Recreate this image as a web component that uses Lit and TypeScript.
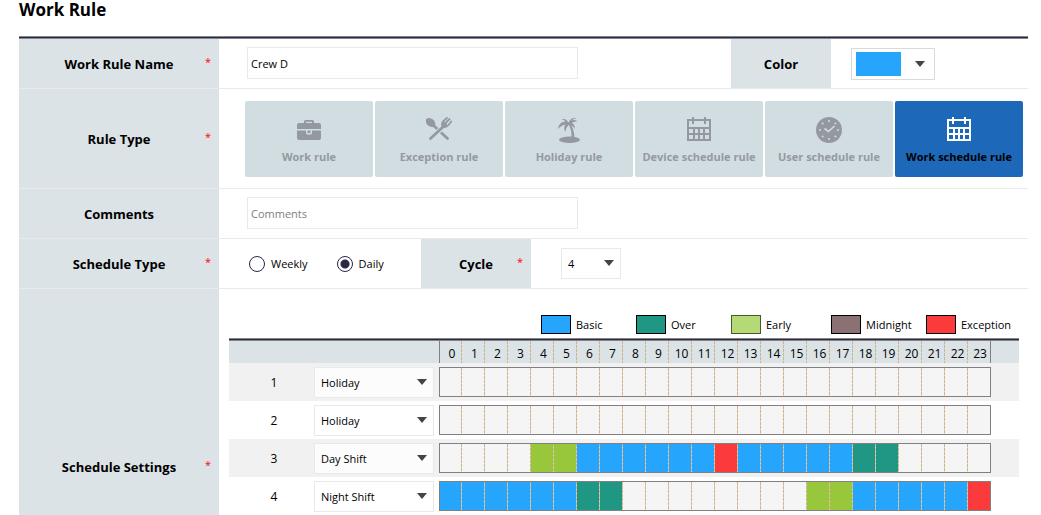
import { LitElement, html, css, svg } from "lit";
import { customElement, property, state } from "lit/decorators.js";
import { classMap } from "lit/directives/class-map.js";

type Kind = "none" | "basic" | "over" | "early" | "exception";
type Span = [number, number, Kind];

interface DayPlan {
  day: number;
  shift: string;
  spans: Span[];
}

const HOURS = Array.from({ length: 24 }, (_, h) => h);

const SHIFTS = ["Holiday", "Day Shift", "Night Shift"];

const PLANS: DayPlan[] = [
  { day: 1, shift: "Holiday", spans: [] },
  { day: 2, shift: "Holiday", spans: [] },
  {
    day: 3,
    shift: "Day Shift",
    spans: [[4, 6, "early"], [6, 12, "basic"], [12, 13, "exception"], [13, 18, "basic"], [18, 20, "over"]],
  },
  {
    day: 4,
    shift: "Night Shift",
    spans: [[0, 6, "basic"], [6, 8, "over"], [16, 18, "early"], [18, 23, "basic"], [23, 24, "exception"]],
  },
];

const LEGEND = [
  { kind: "basic", text: "Basic" },
  { kind: "over", text: "Over" },
  { kind: "early", text: "Early" },
  { kind: "midnight", text: "Midnight" },
  { kind: "exception", text: "Exception" },
];

const calendar = svg`
  <path fill-rule="evenodd" d="M1 2H6V0H8V2H18V0H20V2H25V24H1ZM3 4V10H23V4H20V7H18V4H8V7H6V4ZM3 12V16H7V12ZM9 12V16H12V12ZM14 12V16H17V12ZM19 12V16H23V12ZM3 18V22H7V18ZM9 18V22H12V18ZM14 18V22H17V18ZM19 18V22H23V18Z"/>`;

const ICONS: Record<string, unknown> = {
  briefcase: svg`
    <path fill-rule="evenodd" d="M8 6V4.500Q8 3 9.500 3H16.500Q18 3 18 4.500V6H23Q25 6 25 8V12H1V8Q1 6 3 6ZM10 6H16V4.800H10Z"/>
    <path fill-rule="evenodd" d="M1 13.500H10V16Q10 17.500 11.500 17.500H14.500Q16 17.500 16 16V13.500H25V21Q25 23 23 23H3Q1 23 1 21Z"/>
    <path d="M11.500 13.500H14.500V16H11.500Z"/>`,
  cutlery: svg`
    <ellipse cx="4.500" cy="5.500" rx="3.800" ry="5.400" transform="rotate(-50 4.500 5.500)"/>
    <path d="M7 8 21.500 21.500" fill="none" stroke="currentColor" stroke-width="2.800" stroke-linecap="round"/>
    <path d="M18 9 6 20.500" fill="none" stroke="#d2dde2" stroke-width="5"/>
    <path d="M18.500 8.500 4.500 21.500" fill="none" stroke="currentColor" stroke-width="2.800" stroke-linecap="round"/>
    <path d="M16.500 9.500Q15 6 18 3.500L21 0.800M19.500 6 23.500 2M16.500 9.500Q20 11 22.500 8L25.300 4.500" fill="none" stroke="currentColor" stroke-width="1.800" stroke-linecap="round"/>
    <path d="M16 9.800Q15.500 5.500 18.500 4.500L21.500 7.500Q20 10.500 16 9.800Z"/>`,
  palm: svg`
    <ellipse cx="13.500" cy="22.700" rx="10.500" ry="3.200"/>
    <path d="M11.500 6Q16.500 12 15.300 22H18.500Q18.500 11 13 5Z"/>
    <path d="M12.500 6Q10.500 1 5.500 2.200Q8.500 3 9.500 4.500Q3 4.500 2 12Q5.500 8 9.500 7.500Q7 10.500 9.300 15Q9.800 10.500 12.500 8Q17 8 18.500 12Q19.500 8 15.800 5.800Q19 4 21.500 4.200Q18.500 2 15.500 3.500Q17.500 1.500 21 1.300Q14.500 0 12.500 6Z"/>`,
  calendar,
  clock: svg`
    <circle cx="13" cy="13" r="13"/>
    <path d="M8.500 11.500 12.500 14.500 18.500 9" fill="none" stroke="#d2dde2" stroke-width="1.600"/>
    <g fill="#d2dde2">
      <circle cx="13" cy="4" r="1"/><circle cx="13" cy="22" r="1"/>
      <circle cx="4" cy="13" r="1"/><circle cx="22" cy="13" r="1"/>
      <circle cx="6.600" cy="6.600" r="1"/><circle cx="19.400" cy="6.600" r="1"/>
      <circle cx="6.600" cy="19.400" r="1"/><circle cx="19.400" cy="19.400" r="1"/>
    </g>`,
};

const RULES = [
  { id: "work", text: "Work rule", icon: "briefcase" },
  { id: "exception", text: "Exception rule", icon: "cutlery" },
  { id: "holiday", text: "Holiday rule", icon: "palm" },
  { id: "device", text: "Device schedule rule", icon: "calendar" },
  { id: "user", text: "User schedule rule", icon: "clock" },
  { id: "schedule", text: "Work schedule rule", icon: "calendar" },
];

const arrow = html`<svg class="arrow" viewBox="0 0 10 6" aria-hidden="true"><path d="M0 0H10L5 6Z" /></svg>`;

@customElement("drop-down")
class DropDown extends LitElement {
  @property() label = "";
  @property() value = "";
  @property({ attribute: false }) options: string[] = [];

  static styles = css`
    :host {
      display: grid;
      align-items: center;
      height: 31px;
      box-sizing: border-box;
      border: 1px solid #e6eaec;
      background: rgba(255, 255, 255, 0.8);
    }
    select,
    .arrow {
      grid-area: 1 / 1;
    }
    select {
      appearance: none;
      width: 100%;
      height: 29px;
      padding: 0 24px 0 6px;
      border: 0;
      background: none;
      color: #000;
      font: 11px/16px "Open Sans", "Noto Sans", sans-serif;
    }
    .arrow {
      justify-self: end;
      width: 10px;
      height: 6px;
      margin: 0 6px 2px 0;
      fill: #444;
      pointer-events: none;
    }
  `;

  render() {
    return html`
      <select aria-label=${this.label}>
        ${this.options.map((o) => html`<option ?selected=${o === this.value}>${o}</option>`)}
      </select>
      ${arrow}
    `;
  }
}

@customElement("hour-bar")
class HourBar extends LitElement {
  @property({ attribute: false }) spans: Span[] = [];

  static styles = css`
    :host {
      display: grid;
      grid-template-columns: repeat(24, 23px);
      height: 30px;
    }
    .cell {
      border: 1px solid #808080;
      border-left: 0;
      border-right: 0;
      background: repeating-linear-gradient(#d2b48c 0 3px, #e2d6c6 3px 4px) right / 1px 100% no-repeat #f5f5f5;
    }
    .cell:first-child {
      border-left: 1px solid #808080;
    }
    .cell:last-child {
      border-right: 1px solid #808080;
      background-image: none;
    }
    .cell.basic { background-color: #25a5fc; }
    .cell.over { background-color: #209684; }
    .cell.early { background-color: #98c73b; }
    .cell.exception { background-color: #fb3b3b; }
  `;

  private kindAt(hour: number): Kind {
    const hit = this.spans.find(([from, to]) => hour >= from && hour < to);
    return hit ? hit[2] : "none";
  }

  render() {
    return HOURS.map((h) => html`<div class="cell ${this.kindAt(h)}"></div>`);
  }
}

@customElement("app-root")
class AppRoot extends LitElement {
  @state() private rule = "schedule";

  static styles = css`
    :host {
      display: block;
      box-sizing: border-box;
      height: 100vh;
      overflow: hidden;
      padding: 0 13px 0 19px;
      background: #fff;
      color: #000;
      font: 11px/16px "Open Sans", "Noto Sans", sans-serif;
    }
    * {
      box-sizing: border-box;
    }
    h1 {
      margin: 0;
      height: 36px;
      font-size: 17px;
      line-height: 20px;
      font-weight: 700;
    }
    .rule-line {
      height: 3px;
      background: linear-gradient(#84848f 1px, #2b2a3e 1px 2px, #84848f 2px);
    }
    .row {
      display: grid;
      grid-template-columns: 200px minmax(0, 1fr);
      min-height: 50px;
      border-bottom: 1px solid #e6eaec;
    }
    .row.tall {
      min-height: 100px;
    }
    .row.settings {
      min-height: 357px;
    }
    .name {
      display: grid;
      place-items: center;
      align-self: stretch;
      background: #dbe3e6;
      font-size: 13px;
      line-height: 20px;
      font-weight: 700;
    }
    .name > * {
      grid-area: 1 / 1;
    }
    .star {
      justify-self: end;
      margin: 0 8px 4px 0;
      color: #f00;
      font-size: 11px;
      line-height: 16px;
      font-weight: 400;
    }
    .field {
      display: flex;
      align-items: center;
      min-width: 0;
    }
    .text {
      width: 331px;
      height: 32px;
      margin: 0 0 2px 28px;
      padding: 2px 3px 0;
      border: 1px solid #e6eaec;
      background: #fff;
      color: #000;
      font: inherit;
    }
    .text::placeholder {
      color: #808080;
    }
    .color-name {
      width: 100px;
      margin-left: auto;
    }
    .color-field {
      width: 197px;
      padding-left: 20px;
    }
    .picker {
      display: flex;
      align-items: center;
      gap: 14px;
      width: 84px;
      height: 32px;
      padding: 0 4px;
      border: 1px solid #dadada;
      background: #fff;
    }
    .picked {
      width: 45px;
      height: 24px;
      background: #25a5fc;
    }
    .arrow {
      width: 10px;
      height: 6px;
      fill: #444;
    }
    .rules {
      gap: 2px;
      padding-left: 26px;
    }
    .card {
      display: flex;
      flex-direction: column;
      align-items: center;
      gap: 6px;
      width: 128px;
      height: 76px;
      padding: 16px 0 0;
      border: 0;
      border-radius: 2px;
      background: #d2dde2;
      color: #9499a1;
      font: 700 11px/16px "Open Sans", "Noto Sans", sans-serif;
      white-space: nowrap;
    }
    .card svg {
      flex: none;
      width: 26px;
      height: 26px;
      fill: currentColor;
    }
    .card.on {
      background: #1d68b9;
      color: #000;
    }
    .card.on svg {
      color: #fff;
    }
    .choices {
      display: flex;
      gap: 29px;
      width: 202px;
      padding-left: 30px;
    }
    .choice {
      display: flex;
      align-items: center;
      gap: 6px;
      white-space: nowrap;
    }
    .choice input {
      appearance: none;
      width: 16px;
      height: 16px;
      margin: 0;
      border: 1px solid #2b2745;
      border-radius: 50%;
      background: #fff;
    }
    .choice input:checked {
      background: radial-gradient(circle, #2b2745 4px, #fff 5px);
    }
    .cycle-name {
      width: 110px;
    }
    .cycle {
      width: 60px;
      margin-left: 30px;
    }
    .schedule {
      padding: 26px 9px 0 10px;
    }
    .legend {
      display: grid;
      grid-template-columns: 95px 95px 100px 95px 93px;
      justify-content: end;
      height: 23px;
      margin: 0;
      padding: 0;
      list-style: none;
    }
    .legend li {
      display: flex;
      gap: 5px;
      height: 19px;
      line-height: 20px;
    }
    .swatch {
      width: 30px;
      height: 19px;
      border: 1px solid #000;
    }
    .swatch.basic { background: #25a5fc; }
    .swatch.over { background: #209684; }
    .swatch.early { background: #b5d975; border-color: #4a5a30; }
    .swatch.midnight { background: #8a7173; }
    .swatch.exception { background: #fb3b3b; }
    table {
      width: 100%;
      border-collapse: collapse;
      table-layout: fixed;
    }
    th,
    td {
      padding: 0;
      font-weight: 400;
      vertical-align: top;
    }
    .col-day { width: 85px; }
    .col-shift { width: 125px; }
    thead tr {
      height: 22px;
      background: #dbe3e6;
    }
    .hours {
      display: grid;
      grid-template-columns: repeat(24, 23px);
    }
    .hour {
      height: 22px;
      padding-left: 2px;
      background: repeating-linear-gradient(#d2b48c 0 3px, #dbd6cb 3px 4px) right / 1px 100% no-repeat;
      font-size: 12px;
      line-height: 25px;
      text-align: center;
    }
    .hour:first-child {
      border-left: 1px solid #808080;
    }
    .hour:last-child {
      border-right: 1px solid #808080;
      background: none;
    }
    tbody tr {
      height: 38px;
    }
    tbody tr:nth-child(odd) {
      background: #f1f1f1;
    }
    tbody th {
      padding: 1px 0 0 5px;
      font-size: 12px;
      line-height: 37px;
      text-align: center;
    }
    td {
      padding-top: 4px;
    }
    .shift {
      width: 120px;
    }
  `;

  private name(text: string, required = false, extra = "") {
    return html`<div class="name ${extra}">
      <span>${text}</span>${required ? html`<span class="star">*</span>` : ""}
    </div>`;
  }

  render() {
    return html`
      <h1>Work Rule</h1>
      <div class="rule-line"></div>

      <div class="row">
        <label class="name" for="rule-name"><span>Work Rule Name</span><span class="star">*</span></label>
        <div class="field">
          <input class="text" id="rule-name" type="text" .value=${"Crew D"} />
          ${this.name("Color", false, "color-name")}
          <div class="color-field">
            <button class="picker" type="button" aria-label="Color">
              <span class="picked"></span>${arrow}
            </button>
          </div>
        </div>
      </div>

      <div class="row tall">
        ${this.name("Rule Type", true)}
        <div class="field rules">
          ${RULES.map(
            (r) => html`<button
              type="button"
              class=${classMap({ card: true, on: r.id === this.rule })}
              aria-pressed=${r.id === this.rule}
              @click=${() => (this.rule = r.id)}
            >
              <svg viewBox="0 0 26 26" aria-hidden="true">${ICONS[r.icon]}</svg>
              <span>${r.text}</span>
            </button>`
          )}
        </div>
      </div>

      <div class="row">
        <label class="name" for="comments"><span>Comments</span></label>
        <div class="field">
          <input class="text" id="comments" type="text" placeholder="Comments" />
        </div>
      </div>

      <div class="row">
        ${this.name("Schedule Type", true)}
        <div class="field">
          <div class="choices" role="radiogroup" aria-label="Schedule Type">
            <label class="choice"><input type="radio" name="type" />Weekly</label>
            <label class="choice"><input type="radio" name="type" checked />Daily</label>
          </div>
          ${this.name("Cycle", true, "cycle-name")}
          <drop-down class="cycle" label="Cycle" value="4" .options=${["1", "2", "3", "4", "5", "6", "7"]}></drop-down>
        </div>
      </div>

      <div class="row settings">
        ${this.name("Schedule Settings", true)}
        <div class="schedule">
          <ul class="legend">
            ${LEGEND.map((l) => html`<li><span class="swatch ${l.kind}"></span>${l.text}</li>`)}
          </ul>
          <div class="rule-line"></div>
          <table>
            <colgroup>
              <col class="col-day" />
              <col class="col-shift" />
              <col />
            </colgroup>
            <thead>
              <tr>
                <th></th>
                <th></th>
                <th>
                  <div class="hours">${HOURS.map((h) => html`<span class="hour">${h}</span>`)}</div>
                </th>
              </tr>
            </thead>
            <tbody>
              ${PLANS.map(
                (p) => html`<tr>
                  <th scope="row">${p.day}</th>
                  <td>
                    <drop-down class="shift" label="Shift for day ${p.day}" .value=${p.shift} .options=${SHIFTS}></drop-down>
                  </td>
                  <td><hour-bar .spans=${p.spans}></hour-bar></td>
                </tr>`
              )}
            </tbody>
          </table>
        </div>
      </div>
    `;
  }
}
